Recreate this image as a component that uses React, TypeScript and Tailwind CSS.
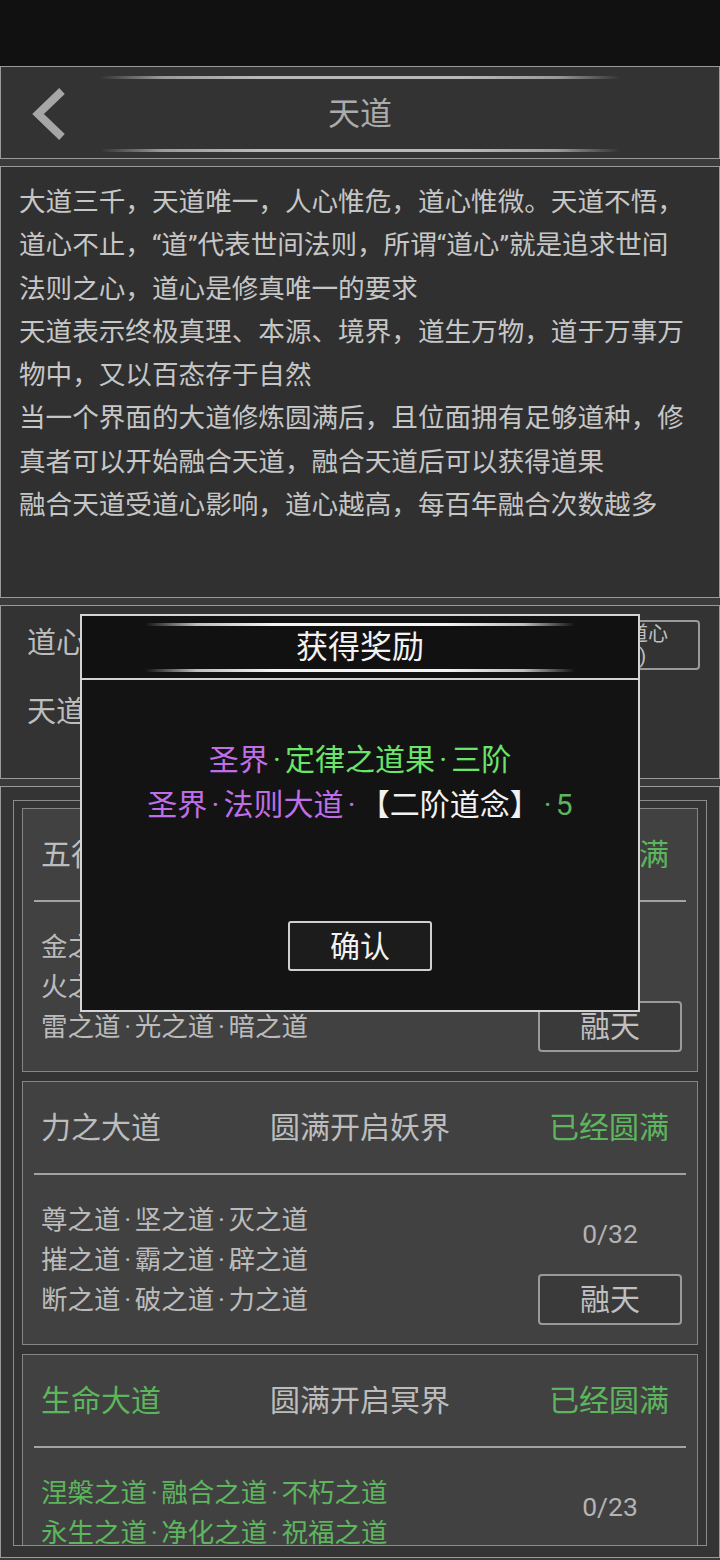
import React from "react";

type Row = string[];

type DaoCard = {
  name: string;
  realm: string;
  status: string;
  rows: Row[];
  count: string;
  green: boolean;
};

const cards: DaoCard[] = [
  {
    name: "五行大道",
    realm: "圆满开启人界",
    status: "已经圆满",
    rows: [
      ["金之道", "木之道", "水之道"],
      ["火之道", "土之道", "冰之道"],
      ["雷之道", "光之道", "暗之道"],
    ],
    count: "0/27",
    green: false,
  },
  {
    name: "力之大道",
    realm: "圆满开启妖界",
    status: "已经圆满",
    rows: [
      ["尊之道", "坚之道", "灭之道"],
      ["摧之道", "霸之道", "辟之道"],
      ["断之道", "破之道", "力之道"],
    ],
    count: "0/32",
    green: false,
  },
  {
    name: "生命大道",
    realm: "圆满开启冥界",
    status: "已经圆满",
    rows: [
      ["涅槃之道", "融合之道", "不朽之道"],
      ["永生之道", "净化之道", "祝福之道"],
      ["轮回之道", "复苏之道", "长生之道"],
    ],
    count: "0/23",
    green: true,
  },
];

function Dot() {
  return <span className="inline-block w-[0.54em] text-center">·</span>;
}

function Joined({ parts }: { parts: string[] }) {
  return (
    <>
      {parts.map((p, i) => (
        <React.Fragment key={i}>
          {i > 0 && <Dot />}
          {p}
        </React.Fragment>
      ))}
    </>
  );
}

function Card({ card }: { card: DaoCard }) {
  return (
    <div className="h-[264px] shrink-0 border border-[#858585] bg-[#414141] flex flex-col">
      {/* 标题行 */}
      <div className="grid grid-cols-[1fr_auto_1fr] items-center h-[91px] px-[18px] text-[30px]">
        <div className={card.green ? "text-[#5db55d]" : "text-[#bdbdbd]"}>{card.name}</div>
        <div className="text-[#bdbdbd]">{card.realm}</div>
        <div className="text-right pr-[10px] text-[#5db55d]">{card.status}</div>
      </div>
      <div className="mx-[11px] h-[2px] bg-[#a3a3a3]" />
      <div className="flex justify-between pl-[18px] pr-[15px] h-[169px]">
        <div
          className={
            "pt-[25px] text-[26.5px] leading-[40px] " +
            (card.green ? "text-[#5db55d]" : "text-[#bbbbbb]")
          }
        >
          {card.rows.map((r, i) => (
            <div key={i} className="whitespace-nowrap">
              <Joined parts={r} />
            </div>
          ))}
        </div>
        <div className="w-[144px] flex flex-col items-center pt-[39px]">
          <div className="text-[26.5px] leading-[40px] text-[#b3b3b3]">{card.count}</div>
          <button className="mt-[20px] w-[144px] h-[51px] border-2 border-[#9a9a9a] rounded-[4px] bg-[#3a3a3a] text-[30px] text-[#c0c0c0]">
            融天
          </button>
        </div>
      </div>
    </div>
  );
}

function GrayLine() {
  return (
    <div className="mx-[99px] h-[3px] bg-[linear-gradient(90deg,rgba(140,140,140,0),#9a9a9a_12%,#b8b8b8_30%,#b8b8b8_70%,#9a9a9a_88%,rgba(140,140,140,0))]" />
  );
}

function WhiteLine() {
  return (
    <div className="mx-[63px] h-[3px] bg-[linear-gradient(90deg,rgba(255,255,255,0),#bdbdbd_12%,#f4f4f4_30%,#f4f4f4_70%,#bdbdbd_88%,rgba(255,255,255,0))]" />
  );
}

export default function App() {
  return (
    <div className="relative w-[720px] h-[1560px] overflow-hidden bg-[#111111] font-['Roboto','Noto_Sans_CJK_SC',sans-serif] flex flex-col">
      <div className="h-[66px] shrink-0" />

      <div className="flex-1 min-h-0 flex flex-col gap-[7px] bg-[#3b3b3b] pb-[2px]">
        {/* 顶栏 */}
        <div className="h-[93px] shrink-0 border border-[#9a9a9a] bg-[#333333] pt-[9px]">
          <GrayLine />
          <div className="grid grid-cols-[1fr_auto_1fr] items-center h-[70px]">
            <div className="pl-[28px] flex items-center">
              <svg width="38" height="52" viewBox="0 0 38 52">
                <polyline
                  points="33,3 9,26 33,49"
                  fill="none"
                  stroke="#a6a6a6"
                  strokeWidth="8"
                  strokeLinejoin="miter"
                />
              </svg>
            </div>
            <div className="text-[32px] text-[#ababab]">天道</div>
            <div />
          </div>
          <GrayLine />
        </div>

        {/* 说明 */}
        <div className="h-[432px] shrink-0 border border-[#9a9a9a] bg-[#303030] pl-[18px] pr-[26px] pt-[13px] text-[26.6px] leading-[43.3px] text-[#c6c6c6]">
          <p>
            大道三千，天道唯一，人心惟危，道心惟微。天道不悟，道心不止，“道”代表世间法则，所谓“道心”就是追求世间法则之心，道心是修真唯一的要求
          </p>
          <p>天道表示终极真理、本源、境界，道生万物，道于万事万物中，又以百态存于自然</p>
          <p>
            当一个界面的大道修炼圆满后，且位面拥有足够道种，修真者可以开始融合天道，融合天道后可以获得道果
          </p>
          <p>融合天道受道心影响，道心越高，每百年融合次数越多</p>
        </div>

        {/* 道心 */}
        <div className="h-[174px] shrink-0 border border-[#9a9a9a] bg-[#333333] flex justify-between pl-[26px] pr-[19px]">
          <div className="pt-[17px] flex flex-col gap-[29px] text-[29px] leading-[40px] text-[#bdbdbd]">
            <div>道心：1580</div>
            <div>天道融合：12次</div>
          </div>
          <div className="pt-[14px]">
            <button className="w-[144px] h-[50px] border-2 border-[#9a9a9a] rounded-[4px] bg-[#333333] text-[20px] leading-[22px] text-[#c0c0c0]">
              提升道心
              <br />
              (10)
            </button>
          </div>
        </div>

        {/* 大道列表 */}
        <div className="flex-1 min-h-0 flex flex-col border border-[#9a9a9a] bg-[#343434] pt-[13px] pb-[11px] px-[12px]">
          <div className="flex-1 min-h-0 overflow-hidden border border-[#8c8c8c] bg-[#343434] pt-[7px] px-[8px] flex flex-col gap-[9px]">
            {cards.map((c) => (
              <Card key={c.name} card={c} />
            ))}
          </div>
        </div>
      </div>

      {/* 获得奖励弹窗 */}
      <div className="fixed inset-x-0 top-[614px] flex justify-center">
        <div className="w-[560px] border-2 border-[#d4d4d4] bg-[#131313] flex flex-col">
          <div className="h-[64px] border-b-2 border-[#d4d4d4] bg-[#111111] pt-[7px]">
            <WhiteLine />
            <div className="h-[43px] leading-[43px] text-center text-[32px] text-[#f2f2f2]">获得奖励</div>
            <WhiteLine />
          </div>
          <div className="h-[330px] flex flex-col items-center pt-[57px] text-[30px] leading-[45px]">
            <div className="whitespace-nowrap">
              <span className="text-[#c06ee8]">圣界</span>
              <span className="text-[#6ae46a]">
                <Dot />
                定律之道果
                <Dot />
                三阶
              </span>
            </div>
            <div className="whitespace-nowrap">
              <span className="text-[#c06ee8]">
                圣界
                <Dot />
                法则大道
                <Dot />
              </span>
              <span className="text-[#f2f2f2]">【二阶道念】</span>
              <span className="text-[#5db55d]">
                <Dot />5
              </span>
            </div>
            <button className="mt-[94px] w-[144px] h-[50px] border-2 border-[#cfcfcf] rounded-[3px] bg-[#1c1c1c] text-[30px] text-[#f2f2f2]">
              确认
            </button>
          </div>
        </div>
      </div>
    </div>
  );
}
